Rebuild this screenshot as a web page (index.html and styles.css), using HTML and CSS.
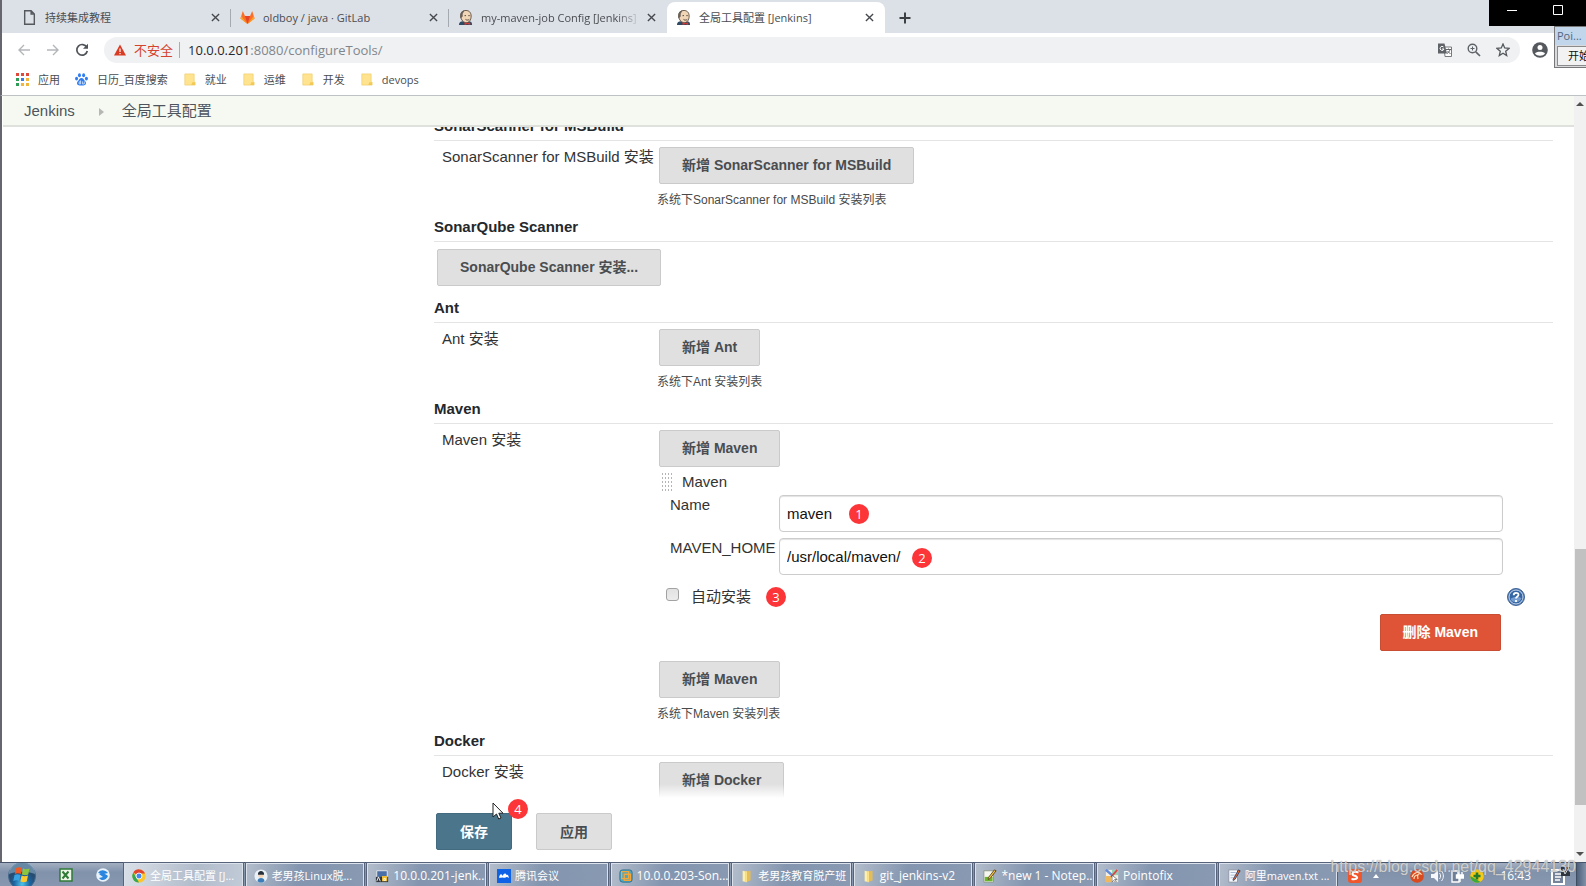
FILE: index.html
```html
<!DOCTYPE html>
<html lang="zh-CN">
<head>
<meta charset="utf-8">
<title>全局工具配置 [Jenkins]</title>
<link rel="stylesheet" href="styles.css">
</head>
<body>
<svg class="defs" aria-hidden="true">
  <symbol id="i-close" viewBox="0 0 10 10"><path d="M1 1l8 8M9 1l-8 8" stroke="#45494d" stroke-width="1.5" fill="none"/></symbol>
  <symbol id="i-jenkins" viewBox="0 0 16 16">
    <path d="M1 16c0-3 2-4 4-4h6c3 0 4 1 4 4z" fill="#2f4a63"/>
    <path d="M3 6c0-4 3-5.500 5.500-5.500S14 2 14 6.500c0 4-2 7-5 7S3 11 3 6z" fill="#f0d6b7" stroke="#5b4a3e"/>
    <path d="M2.500 9C1.500 3 4 .5 7 .5L5 4v3z" fill="#6b6058"/>
    <path d="M7 6h1.500M11 6h1.500M8 10c1 1 3 1 4 0" stroke="#4b3c32" fill="none"/>
    <path d="M7 13l3 1 3-1v3l-3-1-3 1z" fill="#d33833"/>
  </symbol>
  <symbol id="i-folder" viewBox="0 0 12 14"><path d="M1 1h10v8l1 1v3H1z" fill="#ffe38f" stroke="#f0cf70" stroke-width=".8"/><path d="M9 10h3v3H8z" fill="#f3c955"/></symbol>
  <symbol id="i-winfolder" viewBox="0 0 16 16"><path d="M3 2l5 1v12l-5-1z" fill="#fff0a8"/><path d="M6 3l6-1v11l-6 2z" fill="#e6bd55"/><path d="M6 3l2-.5v12L6 15z" fill="#fbe08c"/></symbol>
</svg>

<header class="chrome">
  <nav class="tabs" aria-label="标签页">
    <div class="tab">
      <svg class="fav" viewBox="0 0 14 14"><path d="M2.500.7h6l3 3v9.600h-9zM8.500.7v3h3" fill="none" stroke="#55595d" stroke-width="1.300"/></svg>
      <span class="tab-title">持续集成教程</span>
      <button class="close" aria-label="关闭"><svg><use href="#i-close"/></svg></button>
    </div>
    <div class="tab">
      <svg class="fav" viewBox="0 0 16 16"><path d="M8 15L.5 9 3 1l2.300 5.500h5.400L13 1l2.500 8z" fill="#fc6d26"/><path d="M8 15L5.300 6.500h5.400z" fill="#e24329"/><path d="M8 15L.5 9l.7-2.500zM8 15l7.500-6-.7-2.500z" fill="#fca326"/></svg>
      <span class="tab-title">oldboy / java · GitLab</span>
      <button class="close" aria-label="关闭"><svg><use href="#i-close"/></svg></button>
    </div>
    <div class="tab">
      <svg class="fav"><use href="#i-jenkins"/></svg>
      <span class="tab-title fade">my-maven-job Config [Jenkins]</span>
      <button class="close" aria-label="关闭"><svg><use href="#i-close"/></svg></button>
    </div>
    <div class="tab active">
      <svg class="fav"><use href="#i-jenkins"/></svg>
      <span class="tab-title">全局工具配置 [Jenkins]</span>
      <button class="close" aria-label="关闭"><svg><use href="#i-close"/></svg></button>
    </div>
    <button class="newtab" aria-label="新标签页"><svg viewBox="0 0 12 12"><path d="M6 .5v11M.5 6h11" stroke="#3c4043" stroke-width="2"/></svg></button>
  </nav>

  <div class="toolbar">
    <button class="nav" aria-label="后退"><svg viewBox="0 0 14 14"><path d="M13 7H2M7 2L2 7l5 5" fill="none" stroke="#b4b7ba" stroke-width="1.400"/></svg></button>
    <button class="nav" aria-label="前进"><svg viewBox="0 0 14 14"><path d="M1 7h11M7 2l5 5-5 5" fill="none" stroke="#b4b7ba" stroke-width="1.400"/></svg></button>
    <button class="nav" aria-label="刷新"><svg viewBox="0 0 14 14"><path d="M11.800 4.300A5.300 5.300 0 1 0 12.300 8" fill="none" stroke="#505458" stroke-width="1.700"/><path d="M13 .8v5H8z" fill="#505458"/></svg></button>
    <div class="omnibox">
      <svg class="warn" viewBox="0 0 12 12"><path d="M6 .5l6 11H0z" fill="#d93a22"/><path d="M6 4.500v3.500M6 9v1.300" stroke="#fff" stroke-width="1.200"/></svg>
      <span class="insecure">不安全</span>
      <span class="url"><b>10.0.0.201</b>:8080/configureTools/</span>
      <button class="omni-btn" aria-label="翻译"><svg viewBox="0 0 14 14"><path d="M6 4h7.500v9.500H7z" fill="#fff" stroke="#77797c"/><path d="M0 .5h6.500L9 10.500H0z" fill="#5f6368"/><path d="M5.500 4A2 2 0 1 0 6 6H4" fill="none" stroke="#fff"/><path d="M8 6.500h5M10.500 5.500v1M12 6.500c-.5 2-1.500 3-3 4M9.500 8l3 3" fill="none" stroke="#5f6368"/></svg></button>
      <button class="omni-btn" aria-label="缩放"><svg viewBox="0 0 14 14"><circle cx="5.500" cy="5.500" r="4.300" fill="none" stroke="#5f6368" stroke-width="1.400"/><path d="M8.800 8.800l4.200 4.200" stroke="#5f6368" stroke-width="1.700"/><path d="M5.500 3.500v4M3.500 5.500h4" stroke="#5f6368"/></svg></button>
      <button class="omni-btn" aria-label="收藏"><svg viewBox="0 0 14 14"><path d="M7 1l1.700 4 4.300.4-3.300 2.800 1 4.300L7 10.200l-3.700 2.300 1-4.300L1 5.400 5.300 5z" fill="none" stroke="#55595d" stroke-width="1.300"/></svg></button>
    </div>
    <button class="avatar" aria-label="用户"><svg viewBox="0 0 16 16"><circle cx="8" cy="8" r="7.800" fill="#55595e"/><circle cx="8" cy="5.600" r="2.500" fill="#fff"/><path d="M3 11.500C4 9 12 9 13 11.500c-2 3-8 3-10 0z" fill="#fff"/></svg></button>
  </div>

  <nav class="bookmarks" aria-label="书签">
    <a href="#"><svg class="bm" viewBox="0 0 13 13"><path d="M0 0h3v3H0zM5 0h3v3H5zM10 0h3v3h-3z" fill="#e04a3a"/><path d="M0 5h3v3H0z" fill="#2e9c57"/><path d="M5 5h3v3H5z" fill="#3b7de8"/><path d="M10 5h3v3h-3z" fill="#f0b53a"/><path d="M0 10h3v3H0z" fill="#2e9c57"/><path d="M5 10h3v3H5zM10 10h3v3h-3z" fill="#f0b53a"/></svg>应用</a>
    <a href="#"><svg class="bm" viewBox="0 0 14 14"><g fill="#2f7df0"><ellipse cx="4.800" cy="2.500" rx="1.600" ry="2.200"/><ellipse cx="9.300" cy="2.500" rx="1.600" ry="2.200"/><ellipse cx="1.700" cy="6" rx="1.600" ry="2"/><ellipse cx="12.300" cy="6" rx="1.600" ry="2"/><path d="M7 5.500c2 0 2.500 2 4 3.500 2 2.500 0 4.700-2 4.500H5c-2 .2-4-2-2-4.500C4.500 7.500 5 5.500 7 5.500z"/></g><path d="M6 9.500H4.500v2.300H6V8M8 9v2.800h2V9" stroke="#fff" stroke-width=".7" fill="none"/></svg>日历_百度搜索</a>
    <a href="#"><svg class="bm"><use href="#i-folder"/></svg>就业</a>
    <a href="#"><svg class="bm"><use href="#i-folder"/></svg>运维</a>
    <a href="#"><svg class="bm"><use href="#i-folder"/></svg>开发</a>
    <a href="#"><svg class="bm"><use href="#i-folder"/></svg>devops</a>
  </nav>

  <div class="wincontrols">
    <button aria-label="最小化"><svg viewBox="0 0 10 10"><path d="M0 5.500h10" stroke="#fff"/></svg></button>
    <button aria-label="最大化"><svg viewBox="0 0 10 10"><path d="M.5.5h9v9h-9z" stroke="#fff" fill="none"/></svg></button>
  </div>
  <div class="pointofix"><div class="pf-title">Poi...</div><button>开始</button></div>
</header>

<div class="window">
  <div class="page">
    <nav class="breadcrumb" aria-label="导航"><a href="#">Jenkins</a><span class="sep"></span><a href="#">全局工具配置</a></nav>
    <main class="viewport">
      <form class="config">
        <h2>SonarScanner for MSBuild</h2>
        <div class="row">
          <div class="label">SonarScanner for MSBuild 安装</div>
          <div class="field"><button type="button" class="btn">新增 SonarScanner for MSBuild</button><p class="desc">系统下SonarScanner for MSBuild 安装列表</p></div>
        </div>
        <h2>SonarQube Scanner</h2>
        <div class="solo"><button type="button" class="btn">SonarQube Scanner 安装...</button></div>
        <h2>Ant</h2>
        <div class="row">
          <div class="label">Ant 安装</div>
          <div class="field"><button type="button" class="btn">新增 Ant</button><p class="desc">系统下Ant 安装列表</p></div>
        </div>
        <h2>Maven</h2>
        <div class="row">
          <div class="label">Maven 安装</div>
          <div class="field">
            <button type="button" class="btn">新增 Maven</button>
            <fieldset class="tool">
              <div class="tool-head"><span class="grip"></span>Maven</div>
              <div class="entry"><label for="name">Name</label><div class="input-wrap"><input id="name" type="text" value="maven"><span class="badge on-name">1</span></div></div>
              <div class="entry"><label for="home">MAVEN_HOME</label><div class="input-wrap"><input id="home" type="text" value="/usr/local/maven/"><span class="badge on-home">2</span></div></div>
              <div class="auto"><input id="auto" type="checkbox"><label for="auto">自动安装</label><span class="badge">3</span>
                <button type="button" class="help" aria-label="帮助"><svg viewBox="0 0 18 18"><circle cx="9" cy="9" r="8.500" fill="#476fa6" stroke="#3f659b"/><circle cx="9" cy="9" r="7" fill="#3465a4" stroke="#c5d5ea"/><path d="M3.500 11a6 6 0 0 0 11-1c-2-1-8-2-11 1z" fill="#739bd0"/><path d="M6.700 7.200c0-3.200 4.800-3 4.800-.4C11.500 8.500 9 8.400 9 10.600M9 12v2" fill="none" stroke="#fff" stroke-width="1.800"/></svg></button>
              </div>
              <div class="tool-foot"><button type="button" class="btn danger">删除 Maven</button></div>
            </fieldset>
            <button type="button" class="btn">新增 Maven</button><p class="desc">系统下Maven 安装列表</p>
          </div>
        </div>
        <h2>Docker</h2>
        <div class="row">
          <div class="label">Docker 安装</div>
          <div class="field"><button type="button" class="btn">新增 Docker</button></div>
        </div>
        <div class="sticker">
          <div class="save-wrap"><button type="submit" class="btn primary">保存</button><span class="badge on-save">4</span>
            <svg class="cursor" viewBox="0 0 12 18"><path d="M1 1v14l3.500-3 2.200 5 2.300-1-2.200-4.800H11z" fill="#fff" stroke="#222"/></svg></div>
          <button type="button" class="btn">应用</button>
        </div>
      </form>
    </main>
  </div>
  <div class="scrollbar"><span class="arrow up"></span><span class="track"><span class="thumb"></span></span><span class="arrow down"></span></div>
</div>

<footer class="taskbar">
  <button class="start" aria-label="开始"><svg viewBox="0 0 28 28"><defs><radialGradient id="orb" cy=".8"><stop offset="0" stop-color="#4cc4ea"/><stop offset=".6" stop-color="#1b639f"/><stop offset="1" stop-color="#274c71"/></radialGradient></defs><circle cx="14" cy="13" r="13.500" fill="url(#orb)" stroke="#45698d"/><path d="M1 11a13 13 0 0 1 26 0c-8-3-18-3-26 0z" fill="#9db9d0" opacity=".55"/><path d="M8 5c2-1 4-1 6 0l-1.200 6c-2-1-4-1-6 0z" fill="#ef5a24"/><path d="M15 5.500c2 1 4 1 6.500 0l-1.300 6c-2 1-4 1-6.400 0z" fill="#8cc63f"/><path d="M6.500 12c2-1 4-1 6 0l-1.200 6c-2-1-4-1-6 0z" fill="#38a3e0"/><path d="M13.600 12.500c2 1 4 1 6.400 0l-1.300 6c-2 1-4 1-6.300 0z" fill="#fdc92f"/></svg></button>
  <button class="quick" aria-label="Excel"><svg viewBox="0 0 14 14"><path d="M1 1h12v12H1z" fill="#eef6ea" stroke="#2f7a37" stroke-width="1.500"/><path d="M3.500 3.500l6 7M9.500 3.500l-6 7" stroke="#2f7a37" stroke-width="2"/></svg></button>
  <button class="quick" aria-label="浏览器"><svg viewBox="0 0 14 14"><circle cx="7" cy="7" r="6.800" fill="#e8f2fb"/><path d="M2 5c3-4 7-3 10 0L8 6zM12 8c-2 5-7 5-9 2l4-1-4-3c4-1 7 0 9 2z" fill="#2a86df"/></svg></button>
  <div class="tasks">
    <button class="task current"><svg viewBox="0 0 16 16"><circle cx="8" cy="8" r="7.500" fill="#fbc52c"/><path d="M8 8L1.500 4A7.500 7.500 0 0 1 14.800 5H8z" fill="#e2452f"/><path d="M1.500 4l4 7L8 15.500A7.500 7.500 0 0 1 1.500 4z" fill="#34a853"/><circle cx="8" cy="8" r="3.400" fill="#4285f4" stroke="#fff"/></svg><span class="cjk">全局工具配置 [J...</span></button>
    <button class="task"><svg viewBox="0 0 16 16"><circle cx="8" cy="8" r="7.500" fill="#e9f0f6"/><circle cx="8" cy="7" r="3" fill="#f4d3b5"/><path d="M4.500 6.500C4 1 12 1 11.500 6.500z" fill="#26303c"/><path d="M4 14c0-5 8-5 8 0-2 2-6 2-8 0z" fill="#3b7db8"/></svg><span class="cjk">老男孩Linux脱...</span></button>
    <button class="task"><svg viewBox="0 0 16 16"><path d="M2 2h12v9H2z" fill="#4a6fa7" stroke="#eee"/><path d="M1 9h14v6H1z" fill="#30363c"/><path d="M8 8h6v6H8z" fill="#f1bd38"/><path d="M2 14l2-5 2 5M10 11h2v2h-2z" stroke="#fff" fill="none"/></svg><span>10.0.0.201-jenk...</span></button>
    <button class="task"><svg viewBox="0 0 14 14"><path d="M0 0h14v14H0z" fill="#0d62e5"/><path d="M2 9c.5-4 2.500-5 3.500-2C7 3.500 9 4 9.500 6c1-1 2 0 2.500 3-1.500-1-2.500-1.500-3.500-.5S6 8 5 8.500 3 8.500 2 9z" fill="#fff"/></svg><span class="cjk">腾讯会议</span></button>
    <button class="task"><svg viewBox="0 0 16 16"><rect x="1" y="1" width="14" height="14" rx="3" fill="#4fa6c0" stroke="#2d6f8b"/><path d="M3 3h8v8H3zM6 6h7v7H6z" fill="none" stroke="#f1a73a" stroke-width="1.500"/></svg><span>10.0.0.203-Son...</span></button>
    <button class="task"><svg><use href="#i-winfolder"/></svg><span class="cjk">老男孩教育脱产班</span></button>
    <button class="task"><svg><use href="#i-winfolder"/></svg><span>git_jenkins-v2</span></button>
    <button class="task"><svg viewBox="0 0 16 16"><path d="M1 2h11v13H1z" fill="#f4f6ef" stroke="#8b9483"/><path d="M2 9h9v5H2z" fill="#69b52b"/><path d="M6 10l7-9 2 1-7 9-2 1z" fill="#f3c53a" stroke="#573c20"/></svg><span>*new 1 - Notep...</span></button>
    <button class="task"><svg viewBox="0 0 16 16"><path d="M1 1h14v14H1z" fill="#f4efe3"/><path d="M8 1h7v6H8z" fill="#8fd4b4"/><path d="M1 8h6v7H1z" fill="#f0b85e"/><path d="M1 1l7 6" stroke="#6189dc" stroke-width="3"/><path d="M14 1L7 9" stroke="#e04545" stroke-width="2"/><path d="M8 7v8l2-2 2 2 1-1-2-2h3z" fill="#fff" stroke="#444" stroke-width=".7"/></svg><span>Pointofix</span></button>
    <button class="task"><svg viewBox="0 0 16 16"><path d="M2 1h10v14H2z" fill="#f7f8fb" stroke="#8d95a3"/><path d="M4 4h6M4 7h6M4 10h4" stroke="#9eb3d1"/><path d="M7 12l6-11 2 1-6 10-2 1z" fill="#e86c2f" stroke="#303b60"/></svg><span class="cjk">阿里maven.txt ...</span></button>
  </div>
  <div class="tray">
    <svg viewBox="0 0 14 14"><rect width="14" height="14" rx="3" fill="#f0562b"/><path d="M10.500 3.500C5 1.500 2.500 5 6 6.500c5 1.200 4 4.500-2.500 3.500" fill="none" stroke="#fff" stroke-width="2"/></svg>
    <svg class="caret" viewBox="0 0 8 8"><path d="M1 6l3-4 3 4z" fill="#fff"/></svg>
    <svg class="after-gap" viewBox="0 0 14 14"><circle cx="7" cy="7" r="6.800" fill="#d94a1e"/><path d="M2 8c2-5 7-6 9-3-3-1-4 1-3 5M4 10c0-3 2-4 4-4" fill="none" stroke="#ffdcb8" stroke-width="1.200"/></svg>
    <svg viewBox="0 0 14 14"><path d="M1 5h3l4-4v12L4 9H1z" fill="#f5f7fa"/><path d="M9.500 4c1.500 2 1.500 4 0 6M11.500 2c2.500 3 2.500 7 0 10" fill="none" stroke="#f5f7fa"/></svg>
    <svg viewBox="0 0 14 14"><path d="M2 2h7v11H2z" fill="#6e7f97" stroke="#fff" stroke-width="1.300"/><path d="M8 3v3M12 3v3M6.500 6h7v3h-7zM10 9v4" stroke="#fff" stroke-width="1.400" fill="#fff"/></svg>
    <svg viewBox="0 0 14 14"><circle cx="7" cy="7" r="6.800" fill="#f5c916"/><path d="M.3 7a6.700 6.700 0 0 0 10 5.800z" fill="#3da83b"/><path d="M7 3.500v7M3.500 7h7" stroke="#237a2c" stroke-width="2.600"/></svg>
    <time>16:43</time>
    <svg class="notes" viewBox="0 0 20 18"><path d="M2 3h12v14H2z" fill="#75849a" stroke="#fff" stroke-width="2"/><path d="M5 7h6M5 10h6M5 13h5" stroke="#fff" stroke-width="1.500"/><path d="M11 0h9v9h-9z" fill="#30363d"/><path d="M13 2l2 5 3-5" fill="none" stroke="#d5dae2"/></svg>
  </div>
  <span class="showdesk"></span>
  <span class="watermark">https://blog.csdn.net/qq_42944130</span>
</footer>
</body>
</html>
```
FILE: styles.css
```css
* { box-sizing: border-box; }
body {
  margin: 0;
  height: 100vh;
  display: flex;
  flex-direction: column;
  overflow: hidden;
  background: #fff;
  color: #333;
  font: 15px/20px "Liberation Sans", "Noto Sans CJK SC", sans-serif;
}
button { font: inherit; border: 0; padding: 0; background: none; color: inherit; }
a { color: inherit; text-decoration: none; }
.defs { position: absolute; width: 0; height: 0; }

/* Browser frame */
.chrome {
  position: relative;
  flex: none;
  border-left: 2px solid #66666e;
  border-bottom: 1px solid #bfc2c5;
  font: 11px/16px "Open Sans", "Noto Sans CJK SC", sans-serif;
  color: #4a4d51;
}
.tabs { display: flex; height: 33px; padding: 2px 0 0 11px; background: #dce0e7; }
.tab { position: relative; display: flex; align-items: center; width: 218px; height: 31px; padding: 0 10px 0 9px; }
.tab:nth-child(-n+2)::after { content: ""; position: absolute; right: 0; top: 7px; width: 1px; height: 18px; background: #a5a9b0; }
.tab.active { background: #fff; border-radius: 8px 8px 0 0; }
.fav { width: 15px; height: 15px; margin-right: 8px; }
.tab-title { flex: 1; min-width: 0; overflow: hidden; white-space: nowrap; }
.tab-title.fade { mask-image: linear-gradient(90deg, #000 85%, transparent); }
.close { width: 12px; height: 16px; margin-left: 4px; display: grid; place-items: center; }
.close svg { width: 9px; height: 9px; }
.newtab { width: 40px; height: 31px; display: grid; place-items: center; }
.newtab svg { width: 12px; height: 12px; }

.toolbar { display: flex; align-items: center; height: 33px; padding: 0 38px 0 15px; }
.nav { width: 29px; height: 25px; text-align: left; display: flex; align-items: center; }
.nav svg { width: 14px; height: 14px; }
.omnibox { flex: 1; display: flex; align-items: center; height: 26px; padding: 0 10px 0 10px; border-radius: 13px; background: #f0f1f3; }
.warn { width: 12px; height: 12px; margin-right: 8px; }
.insecure { padding-right: 6px; border-right: 1px solid #a9acb0; color: #d5432d; font-size: 13px; }
.url { flex: 1; padding-left: 8px; font-size: 13px; color: #80868b; }
.url b { font-weight: 400; color: #26282b; }
.omni-btn { margin-left: 15px; width: 14px; height: 14px; }
.omni-btn svg { display: block; width: 14px; height: 14px; }
.avatar { width: 16px; height: 16px; margin-left: 12px; }
.avatar svg { display: block; width: 16px; height: 16px; }

.bookmarks { display: flex; align-items: center; gap: 15px; height: 29px; padding: 0 0 2px 14px; }
.bookmarks a { display: flex; align-items: center; }
.bm { width: 13px; height: 13px; margin-right: 9px; }

.wincontrols { position: absolute; top: 0; right: 0; display: flex; width: 97px; height: 26px; background: #000; }
.wincontrols button { width: 46px; height: 20px; display: grid; place-items: center; }
.wincontrols svg { width: 10px; height: 10px; }
.pointofix {
  position: absolute; top: 26px; right: 0; width: 32px; height: 42px; overflow: hidden;
  border: 1px solid #777; border-right: 0; background: #d8dade;
}
.pf-title { height: 18px; padding: 1px 2px; background: #c1d5eb; color: #526580; }
.pointofix button { width: 44px; height: 20px; margin: 1px 2px; border: 1px solid #8b8b8b; background: #f2f2f2; color: #111; }

/* Page */
.window { flex: 1; min-height: 0; display: flex; border-left: 2px solid #66666e; padding-left: 1px; }
.page { flex: 1; min-width: 0; display: flex; flex-direction: column; }
.breadcrumb {
  flex: none; display: flex; align-items: center; height: 31px; padding: 1px 0 0 21px;
  background: #f6f9f2; border-bottom: 2px solid #dfe2dc; color: #4d545d;
}
.sep { margin: 2px 18px 0 24px; border: 4px solid transparent; border-left: 5px solid #b5b8b5; border-right: 0; }
.viewport { position: relative; flex: 1; min-height: 0; overflow: hidden; }
.config { margin-top: -13px; padding: 0 21px 0 431px; }
h2 { margin: 0; padding: 2px 0 4px; border-bottom: 1px solid #e4e4e4; font-size: 15px; line-height: 20px; color: #24282c; }
.row { display: grid; grid-template-columns: 223px 1fr; padding: 6px 0 4px; }
.label { padding-left: 8px; white-space: nowrap; }
.solo { padding: 7px 0 10px 3px; }
.btn {
  display: block; height: 37px; padding: 0 22px 1px; border: 1px solid #cacaca; border-radius: 2px;
  background: #e0e0e0; color: #4a4d50; font-size: 14px; font-weight: 700; white-space: nowrap;
}
.field > .btn { margin-left: 2px; }
.btn.primary { background: #4b758b; border-color: #436b80; color: #fff; }
.btn.danger { background: #df5437; border-color: #c84d33; color: #fff; }
.desc { margin: 6px 0 0; font-size: 12px; line-height: 21px; color: #4a4a4a; }

.tool { margin: 0; border: 0; padding: 4px 0 10px; min-width: 0; }
.tool-head { display: flex; align-items: center; gap: 8px; height: 24px; padding: 0 0 2px 4px; }
.grip { width: 13px; height: 20px; background: radial-gradient(circle, #b5b5b5 1px, transparent 1px) 0 0 / 3px 4px; }
.entry { display: grid; grid-template-columns: 109px 1fr; margin-bottom: 6px; padding: 0 50px 0 13px; }
.input-wrap { position: relative; }
.input-wrap input {
  display: block; width: 100%; height: 37px; padding: 0 7px 1px; border: 1px solid #ccc; border-radius: 4px;
  background: #fff; box-shadow: inset 0 1px 1px #e3e3e3; font: inherit; color: #111;
}
.auto { display: flex; align-items: center; height: 33px; padding: 0 28px 2px 9px; }
.auto input {
  appearance: none; width: 13px; height: 13px; margin: 0 12px 4px 0; border: 1px solid #a2a2a2; border-radius: 3px;
  background: linear-gradient(#e2e2e2, #ececec);
}
.auto label { margin-right: 15px; }
.help { width: 18px; height: 18px; margin-left: auto; }
.help svg { display: block; width: 18px; height: 18px; }
.tool-foot { display: flex; justify-content: flex-end; padding-right: 52px; }

.badge {
  display: grid; place-items: center; width: 20px; height: 20px; border-radius: 50%;
  background: #fb3538; color: #fff; font: 13px/20px "Open Sans", sans-serif;
}
.on-name, .on-home, .on-save { position: absolute; }
.on-name { left: 70px; top: 9px; }
.on-home { left: 133px; top: 10px; }
.on-save { left: 72px; top: -14px; }

.sticker {
  position: absolute; left: 431px; bottom: 0; right: 21px; display: flex; gap: 24px; padding: 29px 0 12px 2px;
  background: linear-gradient(rgba(255,255,255,0), #fff 14px);
}
.sticker .btn { padding: 0 23px; }
.save-wrap { position: relative; }
.cursor { position: absolute; left: 56px; top: -11px; width: 12px; height: 18px; }

.scrollbar { flex: none; width: 12px; display: flex; flex-direction: column; background: #f1f1f1; }
.arrow { height: 16px; display: grid; place-items: center; }
.arrow::before { content: ""; border: 4px solid transparent; }
.up::before { border-top: 0; border-bottom: 4px solid #505050; }
.down::before { border-bottom: 0; border-top: 4px solid #505050; }
.track { flex: 1; display: flex; flex-direction: column; justify-content: flex-end; padding: 0 0 41px 1px; }
.thumb { height: 37%; background: #c1c1c1; }

/* Taskbar */
.taskbar {
  position: relative; flex: none; display: flex; align-items: center; height: 24px; border-top: 1px solid #46536a;
  background: linear-gradient(#a3afc1, #8192ab 40%, #8797af); color: #fff; font: 12px/16px "Open Sans", "Noto Sans CJK SC", sans-serif;
}
.start { width: 28px; height: 23px; margin: 0 23px 0 8px; overflow: hidden; }
.start svg { display: block; width: 28px; height: 28px; }
.quick { width: 14px; height: 14px; margin-right: 23px; }
.quick svg { display: block; width: 14px; height: 14px; }
.quick + .quick { margin-right: 14px; }
.tasks { flex: 1; display: grid; grid-template-columns: repeat(10, 1fr); gap: 3px; height: 23px; }
.task {
  display: flex; align-items: center; gap: 4px; min-width: 0; padding: 2px 2px 0 7px; overflow: hidden; text-align: left; white-space: nowrap;
  border: 1px solid #dbe2ec; border-width: 1px 1px 0; outline: 1px solid #56637a;
  background: linear-gradient(100deg, #b2bccb, #8395af 45%, #8999b2);
}
.task.current { background: linear-gradient(100deg, #d9dfe7, #b1bccb 60%, #c1cad7); }
.task svg { flex: none; width: 14px; height: 14px; }
.cjk { font-size: 11px; }
.tray { display: flex; align-items: center; gap: 6px; padding: 2px 6px 0 11px; }
.tray svg { width: 14px; height: 14px; }
.tray .caret { width: 8px; height: 8px; margin-left: 4px; }
.tray .after-gap { margin-left: 24px; }
.tray time { margin-left: 10px; }
.tray .notes { width: 20px; height: 18px; margin-left: 13px; }
.showdesk { width: 10px; height: 23px; border-left: 1px solid #3f4d62; background: linear-gradient(90deg, #4d5f7a, #8192a8); }
.watermark { position: absolute; right: 10px; top: -6px; font: 16px/20px "Liberation Sans", sans-serif; color: rgba(255,255,255,.65); text-shadow: 0 0 1px #777; white-space: nowrap; }
```
